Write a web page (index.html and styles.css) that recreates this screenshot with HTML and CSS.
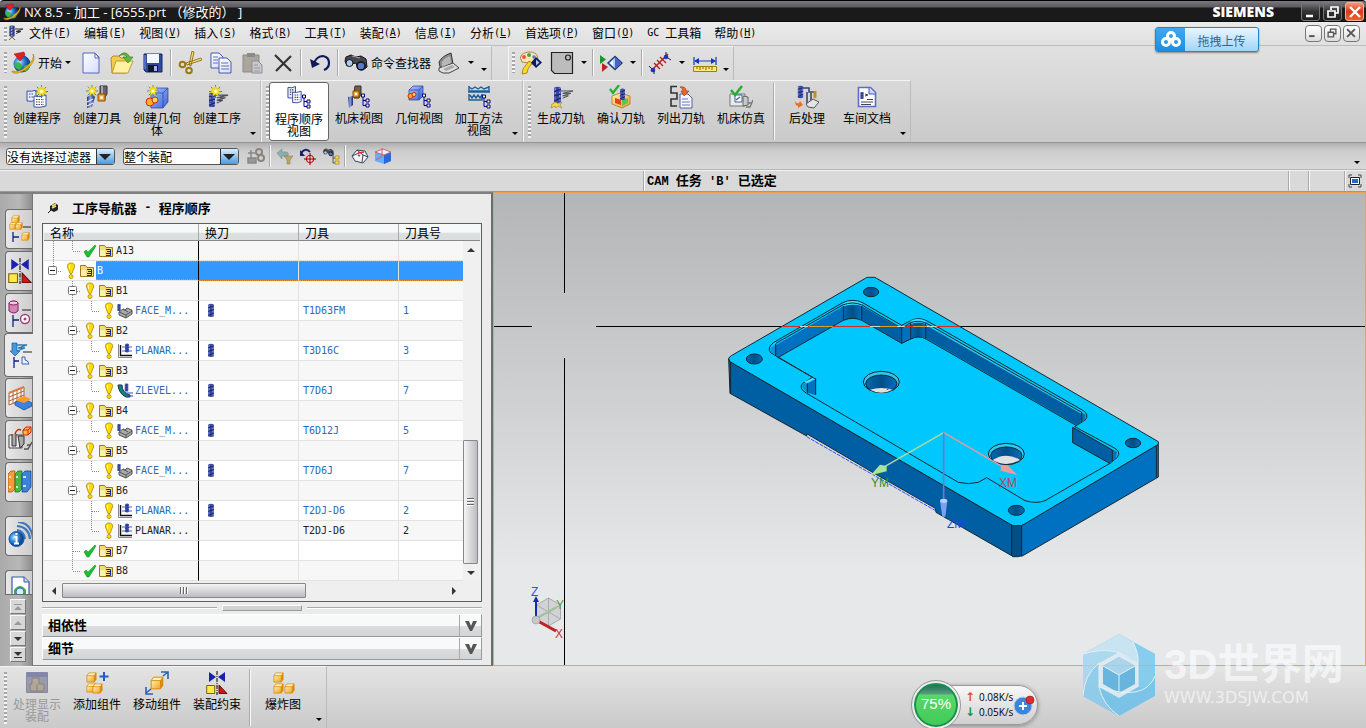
FILE: index.html
```html
<!DOCTYPE html>
<html lang="zh-CN">
<head>
<meta charset="utf-8">
<title>NX 8.5 - 加工</title>
<link rel="stylesheet" href="styles.css">
</head>
<body>
<svg class="defs" aria-hidden="true">
  <defs>
    <linearGradient id="steel"><stop offset="0" stop-color="#23307c"/><stop offset=".4" stop-color="#8fa6ea"/><stop offset="1" stop-color="#1c2560"/></linearGradient>
    <linearGradient id="gold" x2="1" y2="1"><stop offset="0" stop-color="#fff3b0"/><stop offset="1" stop-color="#f0a020"/></linearGradient>
    <linearGradient id="blueface" x2="1" y2="1"><stop offset="0" stop-color="#a8c4ff"/><stop offset="1" stop-color="#3b62d8"/></linearGradient>
    <linearGradient id="paper" x2="1" y2="1"><stop offset="0" stop-color="#fff"/><stop offset="1" stop-color="#d4dcfa"/></linearGradient>
    <linearGradient id="bore"><stop offset="0" stop-color="#0068b0"/><stop offset=".5" stop-color="#004f88"/><stop offset="1" stop-color="#0070bd"/></linearGradient>
    <radialGradient id="globe" cx=".35" cy=".4"><stop offset="0" stop-color="#b9e8ff"/><stop offset=".6" stop-color="#2a80d8"/><stop offset="1" stop-color="#104a98"/></radialGradient>
  </defs>
  <symbol id="star" viewBox="0 0 14 14"><path d="M7 0v14M0 7h14M2 2l10 10M12 2L2 12" stroke="#2d8080" stroke-width="1"/><path d="M7 1l1.300 3.200L12 3 9.800 6 13 8 9.500 8.500 10 12 7 10 4 12l.5-3.500L1 8l3.200-2L3 3l2.800 1.200z" fill="#ffe818" stroke="#d8b000" stroke-width=".5"/><circle cx="7" cy="7" r="1.500" fill="#fff"/></symbol>
  <symbol id="bit" viewBox="0 0 8 16"><path d="M1 1q3-1.500 6 0v13q-3 1.500-6 0z" fill="url(#steel)" stroke="#1c2866" stroke-width=".7"/><path d="M1 5l6-3M1 9l6-3M1 13l6-3" stroke="#2a3580" stroke-width="1.300"/></symbol>
  <symbol id="mill" viewBox="0 0 8 16"><path d="M1 1.500q3-1.500 6 0v13q-3 1-6 0z" fill="#3a49a4"/><path d="M2 2v12M6 2v12" stroke="#8d9fe8" stroke-dasharray="2 1"/><path d="M1 5l6-2M1 9l6-2M1 13l6-2" stroke="#1b2565" stroke-width="1.200"/></symbol>
  <symbol id="tree" viewBox="0 0 9 14"><path d="M2 3v9h4M2 7h4" fill="none" stroke="#000090"/><path d="M.5.5h3v3h-3zM5 5.500h3v3H5zM5 10.500h3v3H5z" fill="#ffffa0" stroke="#000090"/></symbol>
  <symbol id="cube" viewBox="0 0 12 12"><path d="M1 4l2-3h8l-2 3z" fill="#fff5bc"/><path d="M1 4h8v7H1z" fill="url(#gold)"/><path d="M9 4l2-3v7l-2 3z" fill="#e08a10"/><path d="M1 4l2-3h8v7l-2 3H1zM1 4h8v7M9 4l2-3" fill="none" stroke="#d98500" stroke-width=".8"/></symbol>
  <symbol id="grid" viewBox="0 0 22 18"><path d="M1 1q5 1 9-1v10q-4 2-9 1z" fill="#e7edff" stroke="#3450a8"/><path d="M8 6q6 2 12-1v11q-6 2-12 1z" fill="#fff" stroke="#3450a8"/><path d="M3 4h5M3 7h4M10 9.500h8M10 12h8M10 14.500h8" stroke="#445" stroke-width="1.200" stroke-dasharray="1.500 1"/></symbol>
  <symbol id="pages" viewBox="0 0 17 18"><path d="M1 1q4 1 8-1v11q-4 2-8 1z" fill="#e7edff" stroke="#2d449c"/><path d="M6 6q4 1 9-1v11q-4 2-9 1z" fill="#fff" stroke="#2d449c"/><path d="M3 3.500h4M3 6h3M3 8.500h2M8 9h5M8 11.500h5M8 14h5" stroke="#445" stroke-width="1.200" stroke-dasharray="1.500 .8"/></symbol>
  <symbol id="mirror" viewBox="0 0 22 24"><path d="M3 1l7 5-7 5zM19 1l-7 5 7 5z" fill="#1a20b0"/><path d="M11 0v24" stroke="#000" stroke-dasharray="4 1 1 1"/><path d="M.7 14.500h8v8h-8z" fill="#ffe94a" stroke="#7a6500"/><path d="M13 14v8.500h8z" fill="#d01818" stroke="#6d0808"/></symbol>
  <symbol id="speed" viewBox="0 0 16 12"><path d="M0 1h15L2 4h10L2 7h7L2 10" fill="none" stroke="#4a4f60" stroke-width="1.200"/></symbol>
  <symbol id="nx" viewBox="0 0 24 24"><circle cx="11" cy="13" r="8.500" fill="url(#globe)"/><path d="M5 12q3-2 5 1t-2 6q-4-2-5-5zM13 15q4-2 6-1-1 5-5 7-2-3-1-6z" fill="#38b848"/><path d="M1 20Q8 22 16 15T22 3q3 5-2 11T7 22q-6 1-6-2z" fill="#f0b418" stroke="#9a6a00" stroke-width=".5"/><path d="M3 3l10-2 1 3-5 6z" fill="#e32020" stroke="#8d0a0a" stroke-width=".5"/></symbol>
  <symbol id="menu-cam" viewBox="0 0 16 16"><use href="#bit" x="1" y="0" width="6" height="13"/><path d="M7 4h8l-7 2.500h5l-5 2" fill="none" stroke="#333"/><path d="M1 15l3-3 3 3" fill="none" stroke="#806000"/></symbol>
  <symbol id="new" viewBox="0 0 24 24"><path d="M4 2h12l4 4v16H4z" fill="url(#paper)" stroke="#5866c0"/><path d="M16 2l4 5h-4z" fill="#fff" stroke="#5866c0"/></symbol>
  <symbol id="open" viewBox="0 0 24 24"><path d="M1 7l2-2h6l2 2h8v4L16 22H2z" fill="#f0cc50" stroke="#a47b10" stroke-width=".8"/><path d="M2 22l4-12h17l-5 12z" fill="#fff2a0" stroke="#b58a18" stroke-width=".8"/><path d="M9 5q6-7 11 1h3l-5 6-5-6h4Q14 2 9 5z" fill="#63b83c" stroke="#2d7818" stroke-width=".6"/></symbol>
  <symbol id="save" viewBox="0 0 24 24"><path d="M3 3h18v18H5l-2-2z" fill="#2e4ba0" stroke="#182858"/><path d="M6 3h12v9H6z" fill="#f3f7ff"/><path d="M7 14h10v7H7z" fill="#101830"/><path d="M13 15h3v5h-3z" fill="#9fb5e8"/><path d="M4 4v14" stroke="#7e9ce4"/></symbol>
  <symbol id="cut" viewBox="0 0 24 24"><path d="M14 0l2 1-3 14-2-1zM23 7l1 2-15 5-1-2z" fill="#f3dc80" stroke="#846200" stroke-width=".8"/><circle cx="4.500" cy="13.500" r="2.800" fill="none" stroke="#9a7a10" stroke-width="2"/><circle cx="11" cy="19.500" r="2.800" fill="none" stroke="#9a7a10" stroke-width="2"/></symbol>
  <symbol id="copy" viewBox="0 0 24 24"><path d="M2 2h8l4 4v11H2z" fill="url(#paper)" stroke="#4658b0"/><path d="M10 7h8l4 4v11H10z" fill="url(#paper)" stroke="#4658b0"/><path d="M4 6h5M4 9h5M4 12h5M12 12h7M12 15h8M12 18h8" stroke="#6070b8"/></symbol>
  <symbol id="paste" viewBox="0 0 24 24"><path d="M3 4h16v17H3z" fill="#aaa69b" stroke="#8c8980"/><path d="M7 2h8v4H7z" fill="#8b8b8b"/><path d="M12 10h6l4 4v8H12z" fill="#c7c9cc" stroke="#8e9098"/><path d="M14 14h4M14 17h6M14 20h6" stroke="#999"/></symbol>
  <symbol id="del" viewBox="0 0 24 24"><path d="M4 4l16 16M20 5L5 20" stroke="#333" stroke-width="2.200"/></symbol>
  <symbol id="undo" viewBox="0 0 24 24"><path d="M6 12q3-7 9-7 6 1 6 7 0 5-5 7" fill="none" stroke="#10185c" stroke-width="2.200"/><path d="M2 8l2 9 8-4z" fill="#10185c"/></symbol>
  <symbol id="bino" viewBox="0 0 24 24"><path d="M2 6l5-2 5 2 5-1 5 3 1 8-4 3-5-1-2-6-5 1-4 2-2-5z" fill="#45484f" stroke="#111"/><circle cx="5.500" cy="12" r="3.500" fill="#adc6f5" stroke="#111"/><circle cx="17" cy="15" r="4" fill="#5678d0" stroke="#111" stroke-width="1.500"/><path d="M8 5l8 2" stroke="#aaa"/></symbol>
  <symbol id="laptop" viewBox="0 0 24 24"><path d="M2 11Q5 5 14 2l2 11-12 7z" fill="#8d8d8d" stroke="#333"/><path d="M2 17l14-5 6 5-10 5q-7 1-10-2z" fill="#dedede" stroke="#444"/><path d="M5 11q3-4 8-6l1 7-9 4z" fill="#b5b8bb"/><path d="M6 18l9-4 3 2-9 4z" fill="#aaa"/></symbol>
  <symbol id="palette" viewBox="0 0 24 24"><path d="M9 1q10-1 10 8l-4 5-5-2-7-1Q-2 3 9 1z" fill="#ffe5b0" stroke="#977020" stroke-width=".8"/><circle cx="5" cy="6" r="2" fill="#f25050"/><circle cx="10" cy="4" r="2" fill="#50a050"/><circle cx="15" cy="6" r="1.800" fill="#4888e0"/><path d="M3 23l1-5 6-8 3 2-4 6-1 4z" fill="#ffd820" stroke="#8a6a00" stroke-width=".7"/><path d="M12 11.500L17 6l6 5.500-6 5.500z" fill="#11185c"/><path d="M17 8.500v6l3.500-3z" fill="#a9c2ff"/></symbol>
  <symbol id="square" viewBox="0 0 24 24"><path d="M1.500 1.500h21v21h-18l-3-3z" fill="#bcbcbc" stroke="#222" stroke-width="1.200"/><circle cx="18" cy="6.500" r="2.500" fill="none" stroke="#222" stroke-width="1.200"/></symbol>
  <symbol id="play" viewBox="0 0 24 24"><path d="M1 4v9l6-4.500z" fill="#189828"/><path d="M3 12v9l6-5z" fill="#c02020"/><path d="M9 12l7-6.500 7 6.500-7 6.500z" fill="#b5cdf8" stroke="#26387c" stroke-width="1.500"/><path d="M16 6v12l6-6z" fill="#3e68c8"/><path d="M14 9v6l-3-3z" fill="#fff"/></symbol>
  <symbol id="fit" viewBox="0 0 24 24"><path d="M3 20L20 3" stroke="#c01818" stroke-width="1.500"/><path d="M6 12l6 6M9 9l6 6M12 6l6 6" stroke="#c01818" stroke-width="1.300"/><circle cx="5" cy="19" r="2.300" fill="#1e34c8"/><circle cx="18" cy="6" r="2.300" fill="#1e34c8"/><path d="M1 15l3 3M18 1v4M20 7l3 2M6 20v3" stroke="#123" /></symbol>
  <symbol id="measure" viewBox="0 0 24 24"><path d="M1 6v8M23 6v8M2 10h20" stroke="#1438b8" stroke-width="1.200"/><path d="M1 10l5-3v6zM23 10l-5-3v6z" fill="#1438b8"/><path d="M.5 15.500h23v5H.5z" fill="#ffe978" stroke="#a08000"/><path d="M4 16v2M7 16v3M10 16v2M13 16v3M16 16v2M19 16v3" stroke="#806000"/></symbol>
  <symbol id="c-prog" viewBox="0 0 24 24"><use href="#grid" x="1" y="5" width="22" height="18"/><use href="#star" x="10" y="0" width="13" height="13"/></symbol>
  <symbol id="c-tool" viewBox="0 0 24 24"><path d="M15 1h7v8l-2 3v3h-6v-3l1-2z" fill="#6a6470" stroke="#332e38"/><path d="M17 1v9" stroke="#bbb" stroke-width="1.500"/><path d="M13 9h7v7h-7z" fill="#f5a32a" stroke="#8a4e00"/><circle cx="16.500" cy="12.500" r="1.500" fill="#fff"/><path d="M2 12l5-3 3 3-3 10-5 1z" fill="url(#steel)"/><path d="M2 17l6-3M2 21l6-3" stroke="#fff"/><use href="#star" x="1" y="0" width="12" height="12"/></symbol>
  <symbol id="c-geo" viewBox="0 0 24 24"><path d="M6 8l5-5h12v14l-5 6H6z" fill="url(#blueface)" stroke="#26409c" stroke-width=".7"/><path d="M6 8h12l5-5M18 8v15" fill="none" stroke="#26409c" stroke-width=".7"/><circle cx="5" cy="17" r="4" fill="#ffb030" stroke="#d02810"/><circle cx="10" cy="15" r="3" fill="#ffd850" stroke="#d02810"/><use href="#star" x="2" y="0" width="12" height="12"/></symbol>
  <symbol id="c-op" viewBox="0 0 24 24"><use href="#mill" x="3" y="7" width="8" height="16"/><use href="#speed" x="10" y="9" width="14" height="11"/><use href="#star" x="4" y="0" width="13" height="13"/></symbol>
  <symbol id="v-prog" viewBox="0 0 24 24"><use href="#pages" x="0" y="0" width="16" height="18"/><use href="#tree" x="15" y="8" width="9" height="15"/></symbol>
  <symbol id="v-tool" viewBox="0 0 24 24"><path d="M8 1h6v8l-2 4H7V8z" fill="#70604e" stroke="#332e28"/><path d="M6 6h6v6H6z" fill="#f5a32a" stroke="#8a4e00"/><circle cx="9" cy="9" r="1.300" fill="#fff"/><path d="M1 12l5-1v9l-4 3z" fill="url(#steel)"/><use href="#tree" x="14" y="8" width="9" height="15"/></symbol>
  <symbol id="v-geo" viewBox="0 0 24 24"><path d="M2 5l4-4h10v10l-4 4H2z" fill="url(#blueface)" stroke="#26409c" stroke-width=".7"/><path d="M2 5h10l4-4M12 5v10" fill="none" stroke="#26409c" stroke-width=".7"/><circle cx="3.500" cy="11" r="2.500" fill="#ffb030" stroke="#d02810"/><circle cx="7" cy="9.500" r="2" fill="#ffd850" stroke="#d02810"/><use href="#tree" x="15" y="8" width="9" height="15"/></symbol>
  <symbol id="v-meth" viewBox="0 0 24 24"><path d="M2 1v5h20V1M2 2l3 2 3-2 3 2 3-2 3 2 5-2M1 7h22M2 9v6h13V9M3 10l2 3 2-3 2 3 2-3 2 3 2-3" fill="none" stroke="#1f5f98" stroke-width="1.400"/><use href="#tree" x="15" y="9" width="9" height="15"/></symbol>
  <symbol id="gen" viewBox="0 0 24 24"><use href="#mill" x="4" y="1" width="9" height="18"/><use href="#speed" x="12" y="4" width="13" height="12"/><path d="M3 19l4-2 2 2 4-2-2 3 2 3-4-2-2 2-1-2-4 2z" fill="#f7d743" stroke="#7c751c" stroke-width=".5"/></symbol>
  <symbol id="verify" viewBox="0 0 24 24"><path d="M3 11l8-3 10 3v8l-8 4-10-4z" fill="url(#gold)" stroke="#a36a00" stroke-width=".7"/><path d="M6 13l6 2v5l-6-2z" fill="#e84020"/><path d="M13 15l6-2v5l-6 3z" fill="#5ac850"/><use href="#mill" x="10" y="3" width="7" height="13"/><path d="M1 4l3 4 6-8" fill="none" stroke="#20b030" stroke-width="2.200"/></symbol>
  <symbol id="list" viewBox="0 0 24 24"><path d="M8 1.500H2V8h6v6H2v7h6" fill="none" stroke="#333" stroke-width="1.600"/><path d="M11 9h8l4 4v10H11z" fill="#f7f9ff" stroke="#4b60a8"/><path d="M13 14h6M13 17h8M13 20h8" stroke="#6878b0"/><path d="M11 2q6-1 6 4h3l-5 5-3-5h2q0-3-3-4z" fill="#f06820" stroke="#a03000" stroke-width=".6"/></symbol>
  <symbol id="sim" viewBox="0 0 24 24"><path d="M1 9h15v12H1z" fill="#e8eaec" stroke="#777"/><path d="M6 10h7v7H6z" fill="#fff" stroke="#445ca0"/><path d="M14 11l5 1v8l-5 1z" fill="#c5c9cc" stroke="#666"/><path d="M17 22h4l3-7M19 18h4" fill="none" stroke="#777" stroke-width="1.300"/><path d="M7 15l4-3" stroke="#4460c0" stroke-width="1.500"/><path d="M2 5l4 5 7-9" fill="none" stroke="#20b030" stroke-width="2.400"/></symbol>
  <symbol id="post" viewBox="0 0 24 24"><use href="#mill" x="2" y="0" width="7" height="14"/><path d="M8 3h6v4h6M12 7v12M16 8v8" fill="none" stroke="#3b4768" stroke-width="1.600"/><path d="M20 6v7" stroke="#c09020" stroke-width="3"/><path d="M11 19l7-5 6 3-5 6-6-1z" fill="#e2e4e6" stroke="#555"/><path d="M0 16q1 3 4 2l1-2 3 4-5 3v-2q-3 0-3-5z" fill="#f07020"/></symbol>
  <symbol id="doc" viewBox="0 0 24 24"><path d="M3.500 2.500h12l5 5v14h-17z" fill="#fff" stroke="#5a6cc8" stroke-width="1.600"/><path d="M14 3v6h6" fill="#c8d5ff" stroke="#3f56b8"/><use href="#mill" x="5" y="6" width="4" height="9"/><path d="M10 9l3 1-3 1M12 14.500h6M6 17h12M6 19.500h10" fill="none" stroke="#445" /></symbol>
  <symbol id="f-grey" viewBox="0 0 18 18"><path d="M1 11h8v5H1zM4 3v9M1 6h7" fill="#999" stroke="#888" stroke-width="1.500"/><circle cx="12" cy="5" r="3" fill="none" stroke="#89867c" stroke-width="2"/><circle cx="14" cy="11" r="3" fill="none" stroke="#89867c" stroke-width="2"/></symbol>
  <symbol id="f-filter" viewBox="0 0 18 18"><path d="M1 6l5-4v3h5q2 0 1 4H6v3z" fill="#8caeb0" stroke="#6f9092" stroke-width=".6"/><path d="M8 9h9l-3 4v4h-3v-4z" fill="#b9a76a" stroke="#908050" stroke-width=".6"/></symbol>
  <symbol id="f-target" viewBox="0 0 18 18"><path d="M2 6q5-6 9-1" fill="none" stroke="#18206c" stroke-width="2"/><path d="M1 3v6h5z" fill="#18206c"/><circle cx="11" cy="12" r="3.500" fill="#ffdede" stroke="#d01818" stroke-width="1.200"/><path d="M11 6v12M5 12h12" stroke="#600"/></symbol>
  <symbol id="f-find" viewBox="0 0 18 18"><use href="#bino" x="0" y="0" width="13" height="11"/><path d="M11 7v9h3M11 11h3" stroke="#556" fill="none"/><path d="M13 9h4v3h-4zM13 14h4v3h-4z" fill="#ffde50" stroke="#a38000" stroke-width=".7"/></symbol>
  <symbol id="f-box" viewBox="0 0 18 18"><path d="M1 9l5-6 8 1 3 6-5 6-8-2z" fill="#f1f4f8" stroke="#39465c"/><path d="M6 3l6 5 5 2M12 8l-1 7M1 9l7-3" fill="none" stroke="#39465c"/><path d="M7 6l6-1M7 8l2 1" stroke="#d03030" stroke-width="1.500"/></symbol>
  <symbol id="f-cube" viewBox="0 0 18 18"><path d="M1 5l8-3 8 3v9l-7 3-9-3z" fill="#66aff8"/><path d="M10 8l7-3v9l-7 3z" fill="#2a68dc"/><path d="M1 5l8-3 8 3-7 3z" fill="#e8f1ff" stroke="#d05050" stroke-width=".8"/><path d="M8 1v8l-6 4" stroke="#e25858" fill="none"/></symbol>
  <symbol id="screen" viewBox="0 0 14 14"><path d="M1 4V1h3M10 1h3v3M13 10v3h-3M4 13H1v-3" fill="none" stroke="#444"/><path d="M2.500 3.500h9v7h-9z" fill="#fff" stroke="#222"/><path d="M4 5h6v4H4z" fill="#2968c0"/></symbol>
  <symbol id="warn" viewBox="0 0 10 18"><path d="M5 1q4 0 3.500 4L6 11.500H4L1.500 5Q1 1 5 1z" fill="#ffdc10" stroke="#a98600" stroke-width=".8"/><circle cx="5" cy="14.500" r="2" fill="#ffdc10" stroke="#a98600" stroke-width=".8"/><path d="M3.500 3v4" stroke="#fff9b0"/></symbol>
  <symbol id="ok" viewBox="0 0 14 14"><path d="M1 8l2-2 2 2 7-7 1 1-7 11H4z" fill="#18c030" stroke="#0b8c1c" stroke-width=".5"/></symbol>
  <symbol id="folder" viewBox="0 0 16 16"><path d="M1.500 4.500V2.500h5l1.500 2h6.500v9h-13z" fill="#f7da75" stroke="#9a7820"/><path d="M2 7h5v6H2z" fill="#fff0b0"/><path d="M8 6.500h4.500v2H9M8 10.500h1M9 10.500h3.500v2H8M12.500 8v3" fill="none" stroke="#1022b0"/></symbol>
  <symbol id="face" viewBox="0 0 16 16"><path d="M2 9l4-3 2 1 2-2 5 2v4l-6 4-7-3z" fill="#aaa" stroke="#555"/><path d="M2 9l7 3 6-4M9 12v3M6 6l5 3" fill="none" stroke="#555"/><use href="#mill" x="0" y="0" width="4" height="9"/></symbol>
  <symbol id="planar" viewBox="0 0 16 16"><path d="M1.500 1v13.500H15" fill="none" stroke="#888"/><path d="M3.500 2v10.500H15" fill="none" stroke="#111" stroke-width="1.400"/><path d="M5 4h10M5 8h10" stroke="#4060d0"/><use href="#mill" x="7" y="0" width="6" height="10"/></symbol>
  <symbol id="zlevel" viewBox="0 0 16 16"><path d="M1 2h4q0 8 8 10v2H9Q2 11 1 2z" fill="#168080" stroke="#0c3b3b"/><path d="M8 10h8M10 13h6" stroke="#3048c8"/><use href="#mill" x="7" y="0" width="5" height="9"/></symbol>
  <symbol id="t-line" viewBox="0 0 19 20"><path d="M9.500 0v20" stroke="#888" stroke-dasharray="1 1"/></symbol>
  <symbol id="t-tee" viewBox="0 0 19 20"><path d="M9.500 0v20M10 10.500h8" stroke="#888" stroke-dasharray="1 1"/></symbol>
  <symbol id="t-end" viewBox="0 0 19 20"><path d="M9.500 0v10M10 10.500h8" stroke="#888" stroke-dasharray="1 1"/></symbol>
  <symbol id="t-box" viewBox="0 0 19 20"><path d="M9.500 0v20M14 10.500h4" stroke="#888" stroke-dasharray="1 1"/><rect x="5.500" y="5.500" width="8" height="8" rx="1" fill="#fff" stroke="#777"/><path d="M7 9.500h5" stroke="#222"/></symbol>
  <symbol id="t-root" viewBox="0 0 19 20"><path d="M9.500 0v6M14 10.500h4" stroke="#888" stroke-dasharray="1 1"/><rect x="4.500" y="5.500" width="8" height="8" rx="1" fill="#fff" stroke="#777"/><path d="M6 9.500h5" stroke="#222"/></symbol>
  <symbol id="r-asm" viewBox="0 0 24 28"><use href="#cube" x="3" y="0" width="9" height="9"/><use href="#cube" x="1" y="7" width="8" height="8"/><use href="#cube" x="7" y="7" width="8" height="8"/><path d="M15 12h8" stroke="#222"/><path d="M5 17v10M5 22h6" stroke="#102088" fill="none" stroke-width="1.300"/><use href="#cube" x="13" y="17" width="9" height="9"/></symbol>
  <symbol id="r-part" viewBox="0 0 24 28"><path d="M1 4q5-4 9 0v8q-4 4-9 0z" fill="#d883b8" stroke="#84205c"/><ellipse cx="5.500" cy="4" rx="4.500" ry="2" fill="#f5c6e2" stroke="#84205c"/><path d="M14 11h9" stroke="#222"/><path d="M5 16v12M5 21h6" stroke="#102088" stroke-width="1.300"/><circle cx="17" cy="20" r="4.500" fill="#fff" stroke="#a04078" stroke-width="1.500"/><circle cx="17" cy="20" r="1.500" fill="#a04078"/></symbol>
  <symbol id="r-op" viewBox="0 0 24 28"><path d="M3 2h5v8h3l-5 5-5-5h2z" fill="#4a98d8" stroke="#185c98" stroke-width=".7"/><path d="M8 4h10l-9 3h7l-8 3" fill="none" stroke="#2878b8" stroke-width="1.300"/><path d="M14 11h9" stroke="#222"/><path d="M5 16v11M5 20h5" stroke="#102088" stroke-width="1.300"/><path d="M13 16v7h7q-1-4-4-4v-3z" fill="#e8f3ff" stroke="#4060b0"/></symbol>
  <symbol id="r-mach" viewBox="0 0 24 28"><path d="M1 9l15-6v12L1 21z" fill="#fff" stroke="#b06038"/><path d="M1 13l15-6M1 17l15-6M5 8v11M9 6v12M13 5v12" stroke="#b06038"/><path d="M1 9l15-6" stroke="#e07a40" stroke-width="2"/><path d="M7 18l8-4 9 5v3l-8 4-9-5z" fill="#3c82e0" stroke="#184088" stroke-width=".7"/><path d="M7 16l9-4 7 3-7 4z" fill="#ff9a28"/></symbol>
  <symbol id="r-sim" viewBox="0 0 24 28"><path d="M1 9h13v13H1z" fill="#eee" stroke="#444"/><path d="M4 8v12h4V8M10 10h6v8l-4 4z" fill="#aaa" stroke="#333"/><path d="M16 23h4l4-7M19 19h4" fill="none" stroke="#555" stroke-width="1.500"/><path d="M15 4l3-3h5v5l-3 3h-5z" fill="#ffb848" stroke="#d02000"/><path d="M15 4h5l3-3M20 4v5" stroke="#d02000" fill="none"/><path d="M7 8q2-6 6-4" fill="none" stroke="#d02000" stroke-width="1.500"/></symbol>
  <symbol id="r-book" viewBox="0 0 24 28"><path d="M0 6l3-3h4v18l-3 3H0z" fill="#f89a38" stroke="#a44c00" stroke-width=".7"/><path d="M7 6l3-3h4v18l-3 3H7z" fill="#46b848" stroke="#136818" stroke-width=".7"/><path d="M14 6l3-3h6v16l-4 5h-5z" fill="#3b82dc" stroke="#163c84" stroke-width=".7"/><path d="M1 9h2M8 9h2M15 9h3M1 19h2M8 19h2M15 18h3" stroke="#fff" stroke-width="1.500"/></symbol>
  <symbol id="r-info" viewBox="0 0 24 28"><path d="M9 8q7 1 8 9M9 4q12 1 13 13M10 0q13 1 15 16" fill="none" stroke="#3f78bc" stroke-width="2.200"/><circle cx="8.500" cy="17" r="7.500" fill="url(#globe)" stroke="#1e58a0"/><path d="M8.500 11v2M6.500 15h2v6M6 21.500h5" stroke="#fff" stroke-width="2" fill="none"/></symbol>
  <symbol id="r-hist" viewBox="0 0 24 28"><path d="M4 6h12l5 5v14H4z" fill="#fff" stroke="#3858a8" stroke-width="1.200"/><path d="M16 6v5h5" fill="#c8d5ff" stroke="#3858a8"/><path d="M6 19q6-8 12 0v6H6z" fill="#48a848"/><circle cx="12" cy="21" r="4" fill="#d8eeff" stroke="#2878b8"/></symbol>
  <symbol id="a-disp" viewBox="0 0 24 24"><path d="M1.500 1.500h21v20h-21z" fill="#6c7092" stroke="#4c5080"/><path d="M2 2h20v4H2z" fill="#45498a"/><path d="M5 13h2V7h7v6h5v7H5zM12 13v7" fill="#93866a" stroke="#4d4838"/></symbol>
  <symbol id="a-add" viewBox="0 0 24 24"><use href="#cube" x="1" y="1" width="11" height="11"/><use href="#cube" x="1" y="12" width="10" height="10"/><use href="#cube" x="7" y="12" width="11" height="11"/><path d="M19 1v9M14.500 5.500h9" stroke="#2858c8" stroke-width="2"/></symbol>
  <symbol id="a-move" viewBox="0 0 24 24"><use href="#cube" x="5" y="5" width="14" height="14"/><path d="M16 1h7v7M18 5l5-4M1 16v7h7M1 22l5-4" fill="none" stroke="#3060b8" stroke-width="1.600"/></symbol>
  <symbol id="a-exp" viewBox="0 0 24 24"><use href="#cube" x="2" y="1" width="11" height="11"/><use href="#cube" x="2" y="12" width="11" height="11"/><use href="#cube" x="13" y="12" width="11" height="11"/></symbol>
  <symbol id="w-min" viewBox="0 0 18 18"><path d="M4 13h7" stroke="currentColor" stroke-width="2.500"/></symbol>
  <symbol id="w-max" viewBox="0 0 18 18"><path d="M4 8h7v6H4zM7 7V4h7v6h-3" fill="none" stroke="currentColor" stroke-width="1.700"/></symbol>
  <symbol id="w-x" viewBox="0 0 18 18"><path d="M4 4l10 10M14 4L4 14" stroke="currentColor" stroke-width="2.400"/></symbol>
</svg>

<header class="titlebar">
  <svg class="i18"><use href="#nx"/></svg>
  <h1 class="title">NX 8.5 - 加工 - [6555.prt （修改的） ]</h1>
  <span class="brand">SIEMENS</span>
  <div class="wins">
    <button class="win" aria-label="最小化"><svg class="i18"><use href="#w-min"/></svg></button>
    <button class="win" aria-label="还原"><svg class="i18"><use href="#w-max"/></svg></button>
    <button class="win close" aria-label="关闭"><svg class="i18"><use href="#w-x"/></svg></button>
  </div>
</header>

<nav class="menubar">
  <span class="grip"></span>
  <svg class="i16"><use href="#menu-cam"/></svg>
  <div class="menus">
    <button class="menu">文件<span>(<u>F</u>)</span></button>
    <button class="menu">编辑<span>(<u>E</u>)</span></button>
    <button class="menu">视图<span>(<u>V</u>)</span></button>
    <button class="menu">插入<span>(<u>S</u>)</span></button>
    <button class="menu">格式<span>(<u>R</u>)</span></button>
    <button class="menu">工具<span>(<u>T</u>)</span></button>
    <button class="menu">装配<span>(<u>A</u>)</span></button>
    <button class="menu">信息<span>(<u>I</u>)</span></button>
    <button class="menu">分析<span>(<u>L</u>)</span></button>
    <button class="menu">首选项<span>(<u>P</u>)</span></button>
    <button class="menu">窗口<span>(<u>O</u>)</span></button>
    <button class="menu"><span>GC&nbsp;</span>工具箱</button>
    <button class="menu">帮助<span>(<u>H</u>)</span></button>
  </div>
  <div class="docwins">
    <button class="docwin" aria-label="最小化文档"><svg class="i14"><use href="#w-min"/></svg></button>
    <button class="docwin" aria-label="还原文档"><svg class="i14"><use href="#w-max"/></svg></button>
    <button class="docwin" aria-label="关闭文档"><svg class="i14"><use href="#w-x"/></svg></button>
  </div>
</nav>

<section class="tools">
  <div class="toolrow">
    <div class="bar small">
      <span class="grip"></span>
      <button class="start"><svg class="i24"><use href="#nx"/></svg>开始<i class="tri"></i></button>
      <button class="tb" aria-label="新建"><svg class="i24"><use href="#new"/></svg></button>
      <button class="tb" aria-label="打开"><svg class="i24"><use href="#open"/></svg></button>
      <button class="tb" aria-label="保存"><svg class="i24"><use href="#save"/></svg></button>
      <span class="sep"></span>
      <button class="tb" aria-label="剪切"><svg class="i24"><use href="#cut"/></svg></button>
      <button class="tb" aria-label="复制"><svg class="i24"><use href="#copy"/></svg></button>
      <button class="tb" aria-label="粘贴"><svg class="i24"><use href="#paste"/></svg></button>
      <button class="tb" aria-label="删除"><svg class="i24"><use href="#del"/></svg></button>
      <span class="sep"></span>
      <button class="tb" aria-label="撤消"><svg class="i24"><use href="#undo"/></svg></button>
      <span class="sep"></span>
      <button class="finder"><svg class="i24"><use href="#bino"/></svg>命令查找器</button>
      <button class="tb" aria-label="触控模式"><svg class="i24"><use href="#laptop"/></svg></button>
      <button class="drop" aria-label="展开"><i class="tri"></i></button>
      <button class="more" aria-label="工具条选项"><i class="tri"></i></button>
    </div>
    <div class="bar small second">
      <span class="grip"></span>
      <button class="tb" aria-label="渲染样式"><svg class="i24"><use href="#palette"/></svg></button>
      <button class="tb" aria-label="背景"><svg class="i24"><use href="#square"/></svg></button>
      <button class="drop" aria-label="展开"><i class="tri"></i></button>
      <span class="sep"></span>
      <button class="tb" aria-label="显示和隐藏"><svg class="i24"><use href="#play"/></svg></button>
      <button class="drop" aria-label="展开"><i class="tri"></i></button>
      <span class="sep"></span>
      <button class="tb" aria-label="移动对象"><svg class="i24"><use href="#fit"/></svg></button>
      <button class="drop" aria-label="展开"><i class="tri"></i></button>
      <button class="tb" aria-label="测量距离"><svg class="i24"><use href="#measure"/></svg></button>
      <button class="more" aria-label="工具条选项"><i class="tri"></i></button>
    </div>
  </div>
  <div class="toolrow big">
    <div class="bar">
      <span class="grip"></span>
      <button class="cmd"><svg class="i24"><use href="#c-prog"/></svg>创建程序</button>
      <button class="cmd"><svg class="i24"><use href="#c-tool"/></svg>创建刀具</button>
      <button class="cmd"><svg class="i24"><use href="#c-geo"/></svg>创建几何体</button>
      <button class="cmd"><svg class="i24"><use href="#c-op"/></svg>创建工序</button>
      <button class="more" aria-label="工具条选项"><i class="tri"></i></button>
    </div>
    <div class="bar">
      <span class="grip"></span>
      <button class="cmd on"><svg class="i24"><use href="#v-prog"/></svg>程序顺序视图</button>
      <button class="cmd"><svg class="i24"><use href="#v-tool"/></svg>机床视图</button>
      <button class="cmd"><svg class="i24"><use href="#v-geo"/></svg>几何视图</button>
      <button class="cmd"><svg class="i24"><use href="#v-meth"/></svg>加工方法视图</button>
      <button class="more" aria-label="工具条选项"><i class="tri"></i></button>
    </div>
    <div class="bar">
      <span class="grip"></span>
      <button class="cmd"><svg class="i24"><use href="#gen"/></svg>生成刀轨</button>
      <button class="cmd"><svg class="i24"><use href="#verify"/></svg>确认刀轨</button>
      <button class="cmd"><svg class="i24"><use href="#list"/></svg>列出刀轨</button>
      <button class="cmd"><svg class="i24"><use href="#sim"/></svg>机床仿真</button>
      <span class="sep"></span>
      <button class="cmd"><svg class="i24"><use href="#post"/></svg>后处理</button>
      <button class="cmd"><svg class="i24"><use href="#doc"/></svg>车间文档</button>
      <button class="more" aria-label="工具条选项"><i class="tri"></i></button>
    </div>
  </div>
</section>

<section class="selbar">
  <span class="combo"><select class="pick" aria-label="选择过滤器"><option>没有选择过滤器</option></select></span>
  <span class="combo wide"><select class="pick" aria-label="选择范围"><option>整个装配</option></select></span>
  <button class="sb" aria-label="选择意图"><svg class="i18"><use href="#f-grey"/></svg></button>
  <span class="sep"></span>
  <button class="sb" aria-label="过滤器"><svg class="i18"><use href="#f-filter"/></svg></button>
  <button class="sb" aria-label="重置"><svg class="i18"><use href="#f-target"/></svg></button>
  <button class="sb" aria-label="查找"><svg class="i18"><use href="#f-find"/></svg></button>
  <span class="sep"></span>
  <button class="sb" aria-label="隐藏边"><svg class="i18"><use href="#f-box"/></svg></button>
  <button class="sb" aria-label="着色"><svg class="i18"><use href="#f-cube"/></svg></button>
  <button class="more" aria-label="选择条选项"><i class="tri"></i></button>
</section>

<section class="status">
  <span class="st-cue"></span>
  <span class="st-text"><b class="mono">CAM </b>任务<b class="mono"> 'B' </b>已选定</span>
  <span class="st-a"></span><span class="st-b"></span>
  <button class="st-full" aria-label="全屏"><svg class="i14"><use href="#screen"/></svg></button>
</section>

<main class="work">
  <nav class="rail">
    <button class="tab" aria-label="装配导航器"><svg class="i28"><use href="#r-asm"/></svg></button>
    <button class="tab" aria-label="约束导航器"><svg class="i28"><use href="#mirror"/></svg></button>
    <button class="tab" aria-label="部件导航器"><svg class="i28"><use href="#r-part"/></svg></button>
    <button class="tab active" aria-label="工序导航器"><svg class="i28"><use href="#r-op"/></svg></button>
    <button class="tab" aria-label="机床导航器"><svg class="i28"><use href="#r-mach"/></svg></button>
    <button class="tab" aria-label="加工特征导航器"><svg class="i28"><use href="#r-sim"/></svg></button>
    <button class="tab" aria-label="重用库"><svg class="i28"><use href="#r-book"/></svg></button>
    <button class="tab apart" aria-label="浏览器"><svg class="i28"><use href="#r-info"/></svg></button>
    <button class="tab apart clipped" aria-label="历史记录"><svg class="i28"><use href="#r-hist"/></svg></button>
    <div class="steps">
      <button class="step" aria-label="第一个"><i class="line"></i><i class="up dim"></i></button>
      <button class="step" aria-label="上一个"><i class="up dim"></i></button>
      <button class="step" aria-label="下一个"><i class="down"></i></button>
      <button class="step" aria-label="最后一个"><i class="down"></i><i class="line dark"></i></button>
    </div>
  </nav>

  <section class="panel">
    <h2 class="ptitle"><svg class="i12" viewBox="0 0 12 12"><path d="M1 11l4-4" stroke="#111"/><path d="M3 4l5-3 3 2v5L7 10 3 8z" fill="#222"/><path d="M5 4l4-2M5 6l4-2" stroke="#f0e060" stroke-width="1.400"/></svg>工序导航器<span class="mono"> - </span>程序顺序</h2>
    <div class="treebox">
      <div class="treemain">
        <table class="tree">
          <colgroup><col class="c1"><col class="c2"><col class="c2"><col></colgroup>
          <thead><tr><th>名称</th><th>换刀</th><th>刀具</th><th>刀具号</th></tr></thead>
          <tbody>
            <tr><td><div class="node"><svg class="tc"><use href="#t-line"/></svg><svg class="tc"><use href="#t-end"/></svg><svg class="st"><use href="#ok"/></svg><svg class="i16"><use href="#folder"/></svg><span class="nm">A13</span></div></td><td></td><td></td><td></td></tr>
            <tr class="sel"><td><div class="node"><button class="exp" aria-label="折叠 B"><svg class="tc"><use href="#t-root"/></svg></button><svg class="st tall"><use href="#warn"/></svg><svg class="i16"><use href="#folder"/></svg><span class="nm">B</span></div></td><td></td><td></td><td></td></tr>
            <tr><td><div class="node"><i class="tc"></i><button class="exp" aria-label="折叠 B1"><svg class="tc"><use href="#t-box"/></svg></button><svg class="st tall"><use href="#warn"/></svg><svg class="i16"><use href="#folder"/></svg><span class="nm">B1</span></div></td><td></td><td></td><td></td></tr>
            <tr class="op"><td><div class="node"><i class="tc"></i><svg class="tc"><use href="#t-line"/></svg><svg class="tc"><use href="#t-end"/></svg><svg class="st tall"><use href="#warn"/></svg><svg class="i16"><use href="#face"/></svg><span class="nm">FACE_M...</span></div></td><td><svg class="bit"><use href="#mill"/></svg></td><td>T1D63FM</td><td>1</td></tr>
            <tr><td><div class="node"><i class="tc"></i><button class="exp" aria-label="折叠 B2"><svg class="tc"><use href="#t-box"/></svg></button><svg class="st tall"><use href="#warn"/></svg><svg class="i16"><use href="#folder"/></svg><span class="nm">B2</span></div></td><td></td><td></td><td></td></tr>
            <tr class="op"><td><div class="node"><i class="tc"></i><svg class="tc"><use href="#t-line"/></svg><svg class="tc"><use href="#t-end"/></svg><svg class="st tall"><use href="#warn"/></svg><svg class="i16"><use href="#planar"/></svg><span class="nm">PLANAR...</span></div></td><td><svg class="bit"><use href="#mill"/></svg></td><td>T3D16C</td><td>3</td></tr>
            <tr><td><div class="node"><i class="tc"></i><button class="exp" aria-label="折叠 B3"><svg class="tc"><use href="#t-box"/></svg></button><svg class="st tall"><use href="#warn"/></svg><svg class="i16"><use href="#folder"/></svg><span class="nm">B3</span></div></td><td></td><td></td><td></td></tr>
            <tr class="op"><td><div class="node"><i class="tc"></i><svg class="tc"><use href="#t-line"/></svg><svg class="tc"><use href="#t-end"/></svg><svg class="st tall"><use href="#warn"/></svg><svg class="i16"><use href="#zlevel"/></svg><span class="nm">ZLEVEL...</span></div></td><td><svg class="bit"><use href="#mill"/></svg></td><td>T7D6J</td><td>7</td></tr>
            <tr><td><div class="node"><i class="tc"></i><button class="exp" aria-label="折叠 B4"><svg class="tc"><use href="#t-box"/></svg></button><svg class="st tall"><use href="#warn"/></svg><svg class="i16"><use href="#folder"/></svg><span class="nm">B4</span></div></td><td></td><td></td><td></td></tr>
            <tr class="op"><td><div class="node"><i class="tc"></i><svg class="tc"><use href="#t-line"/></svg><svg class="tc"><use href="#t-end"/></svg><svg class="st tall"><use href="#warn"/></svg><svg class="i16"><use href="#face"/></svg><span class="nm">FACE_M...</span></div></td><td><svg class="bit"><use href="#mill"/></svg></td><td>T6D12J</td><td>5</td></tr>
            <tr><td><div class="node"><i class="tc"></i><button class="exp" aria-label="折叠 B5"><svg class="tc"><use href="#t-box"/></svg></button><svg class="st tall"><use href="#warn"/></svg><svg class="i16"><use href="#folder"/></svg><span class="nm">B5</span></div></td><td></td><td></td><td></td></tr>
            <tr class="op"><td><div class="node"><i class="tc"></i><svg class="tc"><use href="#t-line"/></svg><svg class="tc"><use href="#t-end"/></svg><svg class="st tall"><use href="#warn"/></svg><svg class="i16"><use href="#face"/></svg><span class="nm">FACE_M...</span></div></td><td><svg class="bit"><use href="#mill"/></svg></td><td>T7D6J</td><td>7</td></tr>
            <tr><td><div class="node"><i class="tc"></i><button class="exp" aria-label="折叠 B6"><svg class="tc"><use href="#t-box"/></svg></button><svg class="st tall"><use href="#warn"/></svg><svg class="i16"><use href="#folder"/></svg><span class="nm">B6</span></div></td><td></td><td></td><td></td></tr>
            <tr class="op"><td><div class="node"><i class="tc"></i><svg class="tc"><use href="#t-line"/></svg><svg class="tc"><use href="#t-tee"/></svg><svg class="st tall"><use href="#warn"/></svg><svg class="i16"><use href="#planar"/></svg><span class="nm">PLANAR...</span></div></td><td><svg class="bit"><use href="#mill"/></svg></td><td>T2DJ-D6</td><td>2</td></tr>
            <tr><td><div class="node"><i class="tc"></i><svg class="tc"><use href="#t-line"/></svg><svg class="tc"><use href="#t-end"/></svg><svg class="st tall"><use href="#warn"/></svg><svg class="i16"><use href="#planar"/></svg><span class="nm">PLANAR...</span></div></td><td></td><td>T2DJ-D6</td><td>2</td></tr>
            <tr><td><div class="node"><i class="tc"></i><svg class="tc"><use href="#t-tee"/></svg><svg class="st"><use href="#ok"/></svg><svg class="i16"><use href="#folder"/></svg><span class="nm">B7</span></div></td><td></td><td></td><td></td></tr>
            <tr><td><div class="node"><i class="tc"></i><svg class="tc"><use href="#t-end"/></svg><svg class="st"><use href="#ok"/></svg><svg class="i16"><use href="#folder"/></svg><span class="nm">B8</span></div></td><td></td><td></td><td></td></tr>
          </tbody>
        </table>
        <div class="vscroll">
          <span class="vhead"></span>
          <button class="arrow" aria-label="向上滚动"><i class="up"></i></button>
          <span class="vspace"></span>
          <span class="vthumb"><i></i><i></i><i></i></span>
          <button class="arrow" aria-label="向下滚动"><i class="down"></i></button>
        </div>
      </div>
      <div class="hscroll">
        <button class="arrow" aria-label="向左滚动"><i class="left"></i></button>
        <span class="hthumb"><i></i><i></i><i></i></span>
        <span class="hspace"></span>
        <button class="arrow" aria-label="向右滚动"><i class="right"></i></button>
      </div>
    </div>
    <div class="split"><span class="rule"></span><span class="handle"></span><span class="rule"></span></div>
    <button class="fold"><span class="ftext">相依性</span><span class="fchev"><svg class="i14" viewBox="0 0 14 14"><path d="M1 2h4l2 5 2-5h4L8 12H6z" fill="#555"/></svg></span></button>
    <button class="fold"><span class="ftext">细节</span><span class="fchev"><svg class="i14" viewBox="0 0 14 14"><path d="M1 2h4l2 5 2-5h4L8 12H6z" fill="#555"/></svg></span></button>
  </section>

  <section class="view">
    <svg class="scene" viewBox="494 193 871 472" preserveAspectRatio="xMinYMin slice">
      <path d="M564.500 193v100M564.500 358v308M493 326.500h39M596 326.500h770" stroke="#000"/>
      <g transform="translate(720 260) scale(.33333)" stroke="#17272f" stroke-width="3" stroke-linejoin="round">
        <path d="M26 296l4 9 845 490v92L648 757l-2-12-178-102-208-122v7L30 400z" fill="#005fa3"/>
        <path d="M32 306v95" fill="none"/>
        <path d="M875 795h30v92l-10 3h-17l-3-3z" fill="#004f88"/>
        <path d="M905 795l410-242v98L905 889z" fill="#0071c0"/>
        <path d="M1309 557v96" fill="none"/>
        <path d="M26 296q2-6 8-9L436 55l6-3h22l6 3 845 490v8L912 793q-7 4-15 4h-12q-6 0-10-2L30 305z" fill="#00c8ff"/>
        <path d="M152 278q-12-14 8-30l208-120q30-14 60 0l117 68 27-14q22-12 48 0l470 270q18 12 6 28l-32 20 112 60q30 14 16 32l-22 18-195 112q-25 10-60 0l-115-69-25 14q-30 8-60 0L260 400q-26-15-12-30l30-18z" fill="#00c8ff"/>
        <g stroke="none">
          <path d="M158 260l210-122h58l119 67 29-17h44l470 270v28L618 190h-46l-27 14-119-67h-58z" fill="#35c7ec"/>
          <path d="M167 256l203-117v42L175 292l-8-6z" fill="#0071c0"/>
          <path d="M370 137q30-8 56 1v42q-28-10-56 1z" fill="url(#bore)"/>
          <path d="M426 139l119 67v44l-120-70z" fill="#005fa3"/>
          <path d="M545 206l27-14v46l-27 13z" fill="#0071c0"/>
          <path d="M572 192q24-10 46 0v43q-22-10-46 3z" fill="url(#bore)"/>
          <path d="M618 196l467 266v25l-15 8-452-260z" fill="#005fa3"/>
          <path d="M1058 501l119 69v34l-8 6-111-62z" fill="#005fa3"/>
          <path d="M1085 458l12 6-2 17-10 6zM1177 568l14 8-3 20-11 8z" fill="#0073be"/>
          <path d="M287 356v49l-26-7v-27z" fill="#0071c0"/>
          <path d="M247 373l14-5v30l-14-15zM152 263l13-7v29l-13-12z" fill="#1290d0"/>
          <path d="M252 365l28-12 7 4-26 13zM370 130q28-14 56 0v7q-28-8-56 2zM572 182q22-10 44 0v9q-22-7-44 1z" fill="#45dcff"/>
        </g>
        <path d="M167 252v36M370 138v44M425 138v44M545 196v54M572 188v50M617 190v45M1085 456v32M1058 502v46M1177 570v35M287 355v50M262 370v28M175 292l195-111q28-12 55 0l120 69 27-13q24-12 46 0l452 260M1058 548l111 62M168 250l200-115q30-12 58 0l119 70 27-17q22-9 48 2l465 267M1058 502l119 68M170 290l108 62 9 5" fill="none"/>
        <ellipse cx="453" cy="96" rx="23" ry="14" fill="url(#bore)"/><ellipse cx="103" cy="297" rx="24" ry="15" fill="url(#bore)"/><ellipse cx="1239" cy="549" rx="23" ry="14" fill="url(#bore)"/><ellipse cx="889" cy="751" rx="24" ry="15" fill="url(#bore)"/>
        <ellipse cx="484" cy="366" rx="54" ry="32" fill="#32c7ee"/><ellipse cx="484" cy="371" rx="47" ry="26" fill="url(#bore)"/><path d="M450 389q34-10 68 0-34 18-68 0z" fill="#dfe1e3" stroke="none"/><path d="M500 390l16-10v-8" stroke="#3355ee" fill="none"/>
        <ellipse cx="859" cy="582" rx="54" ry="32" fill="#32c7ee"/><ellipse cx="859" cy="587" rx="47" ry="26" fill="url(#bore)"/><path d="M818 600q40-26 82 0-40 24-82 0z" fill="#dfe1e3" stroke="none"/>
        <path d="M185 199.500h533" stroke="#e02818" stroke-width="3"/><path d="M240 199.500h24M450 199.500h30M530 199.500h24M620 199.500h30" stroke="#c9dfd0" stroke-width="3"/><path d="M268 199.500h70M480 199.500h50M580 199.500h40" stroke="#e0a020" stroke-width="3"/>
        <path d="M260 530l390 224" stroke="#2a4cff" stroke-dasharray="12 3" fill="none"/>
        <path d="M671 518L490 622" stroke="#a9dda0" stroke-width="4"/><path d="M452 646l28-32 20 4v16z" fill="#a7e59c" stroke="none"/>
        <path d="M671 518l180 104" stroke="#e69aa0" stroke-width="4"/><path d="M892 645l-50-13 1-18 20 2z" fill="#f19a9a" stroke="none"/>
        <path d="M671 518v210" stroke="#7078c8" stroke-width="5"/><path d="M660 722h22l-6 48h-9z" fill="#7ea0f0" stroke="none"/><ellipse cx="671" cy="722" rx="11" ry="6" fill="#b8d0ff" stroke="none"/>
      </g>
      <text class="ax" x="871" y="487" fill="#289028">YM</text><text class="ax" x="999" y="487" fill="#c04848">XM</text><text class="ax" x="947" y="528" fill="#2048e0">ZM</text>
      <path d="M548.500 598l12 7v14l-12 7-12-7v-14z" fill="#d2d3d4" stroke="#aaa"/><path d="M536.500 605l24 14M560.500 605l-24 14M548.500 598v28" stroke="#aaa"/>
      <path d="M537 618l20-11" stroke="#a0c0a0" stroke-width="2"/><path d="M536 620v-22" stroke="#1030a8" stroke-width="2"/><path d="M533 602l3-6 3 6z" fill="#1030a8"/><path d="M536 620l20 11" stroke="#c02020" stroke-width="3"/><circle cx="536" cy="620" r="4" fill="#c8c8c8" stroke="#888" stroke-width=".5"/>
      <text class="ax" x="531" y="596" fill="#2858e0">Z</text><text class="ax" x="556" y="609" fill="#48a048">Y</text><text class="ax" x="555" y="638" fill="#c83838">X</text>
    </svg>
  </section>
</main>

<footer class="bottom">
  <div class="bar">
    <span class="grip"></span>
    <button class="cmd off" disabled><svg class="i24"><use href="#a-disp"/></svg>处理显示装配</button>
    <button class="cmd"><svg class="i24"><use href="#a-add"/></svg>添加组件</button>
    <button class="cmd"><svg class="i24"><use href="#a-move"/></svg>移动组件</button>
    <button class="cmd"><svg class="i24"><use href="#mirror"/></svg>装配约束</button>
    <span class="sep"></span>
    <button class="cmd"><svg class="i24"><use href="#a-exp"/></svg>爆炸图</button>
    <button class="more" aria-label="工具条选项"><i class="tri"></i></button>
  </div>
</footer>

<button class="upload"><span class="uicon"><svg class="i22" viewBox="0 0 22 22"><circle cx="11" cy="8" r="3.500" /><circle cx="6" cy="14" r="3.500"/><circle cx="16" cy="14" r="3.500"/></svg></span><span class="utext">拖拽上传</span></button>

<div class="watermark">
  <svg class="hex" viewBox="0 0 72 82"><path d="M36 0l36 20v42L36 82 0 62V20z" fill="#6cc1ea"/><path d="M0 20L36 0l14 8q6 12 5 21Q34 10 0 20z" fill="#c4e4f3"/><path d="M0 20q30-10 55 9L36 18 16 29q-15 12-16 33z" fill="#a2d7f0"/><path d="M0 62q1-21 16-33v24q4 18 20 29z" fill="#84caec"/><path d="M50 8l22 12v22Q66 55 55 53V29q1-9-5-21z" fill="#78c9ee"/><path d="M16 29l20-11 19 11v24L36 64 16 53z" fill="#dcebf3"/><path d="M20 32l16-9 16 9v18l-16 9-16-9z" fill="#54aedd"/><path d="M20 32l16-9 16 9-16 9z" fill="#9fd3ee"/><path d="M36 41v18M20 32l16 9 16-9M0 20q32-10 55 9M50 8q6 12 5 21v24M72 42Q62 68 16 53M36 82Q20 71 16 53V29M0 62q1-21 16-33" fill="none" stroke="#e6f3fa"/></svg>
  <div class="wtext"><span class="wbig">3D世界网</span><span class="wurl">WWW.3DSJW.COM</span></div>
</div>

<div class="meter">
  <div class="ball">75%</div>
  <div class="rates"><span><i class="r">↑</i>0.08K/s</span><span><i class="g">↓</i>0.05K/s</span></div>
  <button class="plus" aria-label="加速"><svg class="i22" viewBox="0 0 22 22"><circle cx="10" cy="12" r="9" fill="#3b86dc" stroke="#c0c8d4"/><path d="M10 8v8M6 12h8" stroke="#fff" stroke-width="2"/><circle cx="17" cy="6" r="4" fill="#d83030" stroke="#a01010" stroke-width=".6"/></svg></button>
</div>
</body>
</html>
```

FILE: styles.css
```css
* { box-sizing: border-box; }
html, body { height: 100%; }
body {
  margin: 0;
  display: flex;
  flex-direction: column;
  position: relative;
  overflow: hidden;
  background: #d9d9d9;
  color: #000;
  font: 12px/12px "Noto Sans CJK SC", sans-serif;
}
button {
  margin: 0;
  padding: 0;
  border: 0;
  background: none;
  color: inherit;
  font: inherit;
}
svg { display: block; flex: none; }
.defs { position: absolute; width: 0; height: 0; }
.i12 { width: 12px; height: 12px; }
.i14 { width: 14px; height: 14px; }
.i16 { width: 16px; height: 16px; }
.i18 { width: 18px; height: 18px; }
.i22 { width: 22px; height: 22px; }
.i24 { width: 24px; height: 24px; }
.i28 { width: 24px; height: 28px; }
.mono { font-family: "Liberation Mono", monospace; font-size: 12px; white-space: pre; }

/* title bar */
.titlebar {
  flex: none;
  height: 22px;
  display: flex;
  align-items: center;
  padding: 0 2px 0 3px;
  gap: 3px;
  color: #fff;
  border-top: 1px solid #000;
  border-radius: 4px 4px 0 0;
  background: linear-gradient(#7b7880, #5b585e 30%, #1a1a1a 32%, #1a1a1a 94%, #000);
}
.title {
  margin: 0;
  flex: 1;
  font: 13px/18px "Open Sans", "Noto Sans CJK SC", sans-serif;
}
.brand { font: 800 14px/18px "Open Sans", sans-serif; margin-right: 24px; }
.wins { display: flex; gap: 3px; }
.win {
  width: 19px;
  height: 19px;
  border: 1px solid #777;
  border-radius: 3px;
  background: linear-gradient(#77747a, #333 50%, #1d1d1d);
  color: #fff;
}
.win.close { background: linear-gradient(#f09a80, #e03818 50%, #f06030); border-color: #f3b09c; }

/* menu bar */
.menubar {
  flex: none;
  height: 24px;
  display: flex;
  align-items: center;
  padding: 0 6px 1px 4px;
  background: linear-gradient(#ebebeb, #e0e0e0);
  border-bottom: 1px solid #bdbdbd;
}
.grip {
  flex: none;
  align-self: stretch;
  width: 3px;
  margin: 5px 0;
  background: repeating-linear-gradient(#a6a6a6 0 2px, #f4f4f4 2px 4px);
}
.menubar .grip { margin: 5px 1px 3px 0; }
.menus { flex: 1; display: flex; gap: 13px; margin-left: 5px; }
.menu { display: flex; align-items: center; line-height: 18px; white-space: nowrap; }
.menu span { font: 10px/18px "DejaVu Sans Mono", monospace; }
.docwins { display: flex; gap: 2px; }
.docwin {
  width: 17px;
  height: 17px;
  border: 1px solid #777;
  border-radius: 4px;
  background: linear-gradient(#fff, #dcdcdc);
  color: #555;
}

/* toolbars */
.tools {
  flex: none;
  background: linear-gradient(#e1e1e1, #cacaca);
  border-bottom: 1px solid #959595;
}
.toolrow { display: flex; height: 34px; }
.toolrow.big { height: 62px; }
.bar {
  display: flex;
  align-items: center;
  padding: 0 1px 0 4px;
  border-top: 1px solid #f4f4f4;
  border-right: 1px solid #bbb;
}
.bar + .bar { border-left: 1px solid #f4f4f4; }
.small { padding-bottom: 2px; }
.bar.second { margin-left: 16px; padding-left: 3px; }
.small .grip { margin-right: 4px; }
.second .grip { margin-right: 0; }
.start, .finder { display: flex; align-items: center; }
.start { width: 64px; gap: 3px; white-space: nowrap; }
.finder { width: 92px; padding-left: 3px; gap: 3px; white-space: nowrap; }
.tb { width: 31px; display: flex; justify-content: center; }
.drop { width: 14px; display: flex; justify-content: center; }
.tri {
  flex: none;
  border: 3px solid transparent;
  border-top-color: #000;
  border-bottom: 0;
}
.more { width: 12px; align-self: flex-end; display: flex; justify-content: center; padding-bottom: 7px; }
.sep {
  flex: none;
  align-self: stretch;
  width: 2px;
  margin: 2px;
  background: linear-gradient(90deg, #aaa 50%, #fafafa 50%);
}
.second .sep { margin: 2px 1px; }
.big .bar, .bottom .bar { align-items: stretch; }
.big .grip, .bottom .grip { margin: 5px 0 4px; }
.cmd {
  width: 60px;
  padding: 3px 5px 0;
  display: flex;
  flex-direction: column;
  align-items: center;
  justify-content: flex-start;
  gap: 3px;
  border: 1px solid transparent;
  margin-bottom: 1px;
  text-align: center;
  line-height: 12px;
}
.cmd.on { background: #fff; border-color: #666; border-radius: 3px; margin-top: 1px; }
.cmd.off { color: #999; }
.cmd.off svg { opacity: .6; }

/* selection bar */
.selbar {
  flex: none;
  height: 27px;
  display: flex;
  align-items: center;
  padding: 0 3px 0 6px;
  background: linear-gradient(#b0b0b0, #cdcdcd 30%, #d9d9d9);
  border-bottom: 1px solid #b5b5b5;
}
.combo { position: relative; width: 109px; margin-right: 8px; }
.combo.wide { width: 116px; margin-right: 5px; }
.pick {
  display: block;
  width: 100%;
  height: 17px;
  padding: 0 18px 0 0;
  appearance: none;
  border: 1px solid #555;
  border-radius: 3px;
  background: #fff;
  color: #000;
  font: 12px/15px "Noto Sans CJK SC", sans-serif;
}
.combo::before {
  content: "";
  position: absolute;
  inset: 1px 1px 1px auto;
  width: 17px;
  border-left: 1px solid #333;
  border-radius: 0 2px 2px 0;
  background: linear-gradient(#d9efff, #4a9ae0);
  pointer-events: none;
}
.combo::after {
  content: "";
  position: absolute;
  right: 4px;
  top: 6px;
  border: 6px solid transparent;
  border-top-color: #222;
  border-bottom: 0;
  pointer-events: none;
}
.sb { width: 23px; display: flex; justify-content: center; }
.selbar .more { margin-left: auto; padding-bottom: 5px; }

/* status line */
.status {
  flex: none;
  height: 22px;
  display: flex;
  align-items: center;
  border-top: 1px solid #f2f2f2;
  border-bottom: 1px solid #999;
  font-size: 13px;
  font-weight: 700;
  line-height: 18px;
}
.status > span { height: 20px; border-right: 1px solid #aaa; box-shadow: 1px 0 #f8f8f8; }
.st-cue { flex: 0 0 644px; }
.st-text { flex: 1; padding-left: 3px; }
.st-a { flex: 0 0 20px; }
.st-b { flex: 0 0 36px; }
.st-full { padding: 0 4px 0 3px; }

/* work area */
.work { flex: 1; min-height: 0; display: flex; }
.rail {
  flex: none;
  width: 33px;
  padding-top: 15px;
  display: flex;
  flex-direction: column;
  align-items: flex-end;
  gap: 2px;
  border-top: 2px solid #808080;
  border-right: 1px solid #777;
  background: linear-gradient(90deg, #aaa, #b8b8b8 60%, #8e8e8e);
}
.tab {
  flex: none;
  width: 27px;
  height: 40px;
  padding-left: 2px;
  display: flex;
  align-items: center;
  border: 1px solid #6c6c6c;
  border-right: 0;
  border-radius: 4px 0 0 4px;
  background: linear-gradient(90deg, #e8e8e8, #cdcdcd);
  overflow: hidden;
}
.tab.active { width: 29px; height: 44px; margin: -2px -1px -1px 0; padding-left: 4px; background: #ebebeb; }
.tab.apart { margin-top: 12px; }
.tab.clipped { height: 25px; align-items: flex-start; border-bottom-left-radius: 0; }
.steps { align-self: flex-start; margin: 2px 0 0 10px; display: flex; flex-direction: column; gap: 1px; }
.step {
  width: 16px;
  height: 15px;
  display: flex;
  flex-direction: column;
  align-items: center;
  justify-content: center;
  gap: 1px;
  border: 1px solid #fff;
  border-color: #f8f8f8 #777 #777 #f8f8f8;
  background: #d8d8d8;
}
.up, .down, .left, .right { border: 4px solid transparent; }
.up { border-top: 0; border-bottom-color: #333; }
.down { border-bottom: 0; border-top-color: #333; }
.left { border-left: 0; border-right-color: #333; }
.right { border-right: 0; border-left-color: #333; }
.up.dim { border-bottom-color: #999; }
.line { width: 8px; height: 1px; background: #999; }
.line.dark { background: #333; }

.panel {
  flex: 0 0 460px;
  min-width: 0;
  padding: 0 9px;
  display: flex;
  flex-direction: column;
  border-top: 2px solid #808080;
  border-right: 2px solid #6c6c6c;
  border-bottom: 1px solid #808080;
  background: #ebebeb;
}
.ptitle {
  margin: 0;
  flex: none;
  height: 29px;
  padding: 0 0 2px 5px;
  display: flex;
  align-items: center;
  font-size: 13px;
  font-weight: 700;
  white-space: pre;
}
.ptitle .i12 { margin-right: 13px; }
.treebox { border: 1px solid #5f5f5f; padding: 0 1px 2px; background: #efefef; }
.treemain { display: flex; }
.tree { flex: 1; table-layout: fixed; width: 0; border-collapse: separate; border-spacing: 0; }
.c1 { width: 155px; }
.c2 { width: 100px; }
.tree th {
  height: 17px;
  padding: 0 0 0 6px;
  text-align: left;
  font-weight: 400;
  line-height: 15px;
  border-bottom: 1px solid #888;
  border-right: 1px solid #aaa;
  background: linear-gradient(#f7f9f9 50%, #dcdfe0 60%);
}
.tree th:last-child { border-right: 0; }
.tree td {
  height: 20px;
  padding: 0 0 0 4px;
  color: #222;
  font: 10px/19px "DejaVu Sans Mono", monospace;
  border-bottom: 1px solid #e2e2e2;
  border-right: 1px solid #e2e2e2;
}
.tree td:first-child { padding: 0; border-right-color: #000; }
.tree td:last-child { border-right: 0; }
.tree tr:nth-child(odd) td { background: #f7f7f7; }
.tree tr:nth-child(even) td { background: #fff; }
.tree .op td { color: #2a6cb8; }
.tree .op td:first-child { white-space: nowrap; }
.node { display: flex; align-items: center; height: 19px; overflow: hidden; }
.tc { display: block; flex: none; width: 19px; height: 20px; }
.exp { flex: none; display: block; }
.st { width: 16px; height: 14px; }
.st.tall { height: 18px; }
.nm { flex: 1; margin-left: 1px; padding-left: 1px; }
.tree tbody .sel td + td { background: #39f; border-bottom: 1px dotted #f09020; border-top: 1px dotted #f09020; }
.sel .nm { background: #39f; color: #fff; border: 1px dotted #f09020; border-width: 1px 0; line-height: 17px; }
.bit { width: 8px; height: 15px; margin-left: 4px; }
.arrow { flex: none; display: flex; align-items: center; justify-content: center; width: 16px; height: 17px; }
.vscroll { flex: none; width: 17px; display: flex; flex-direction: column; background: #f0f0f0; }
.vhead { flex: none; height: 17px; border-bottom: 1px solid #888; background: linear-gradient(#f7f9f9 50%, #dcdfe0 60%); }
.vspace { flex: 184; }
.vthumb, .hthumb {
  display: flex;
  align-items: center;
  justify-content: center;
  gap: 1px;
  border: 1px solid #888;
  border-radius: 1px;
}
.vthumb { flex: 123; flex-direction: column; width: 15px; background: linear-gradient(90deg, #f4f4f4, #d2d2d6 60%, #bbbbc2); }
.vthumb i { width: 7px; height: 2px; background: linear-gradient(#666 50%, #fff 50%); }
.hscroll { display: flex; align-items: center; height: 18px; padding: 2px 18px 1px 2px; }
.hthumb { flex: 244; height: 15px; background: linear-gradient(#f4f4f4, #d2d2d6 60%, #bbbbc2); }
.hthumb i { width: 2px; height: 7px; background: linear-gradient(90deg, #666 50%, #fff 50%); }
.hspace { flex: 141; }
.split { flex: none; height: 12px; display: flex; align-items: center; gap: 5px; }
.rule { flex: 1; height: 2px; background: linear-gradient(#aaa 50%, #fff 50%); }
.handle { width: 80px; height: 6px; border: 1px solid #fff; border-color: #fff #999 #999 #fff; background: #d2d2d2; }
.fold {
  flex: none;
  height: 23px;
  display: flex;
  align-items: center;
  border: 1px solid #fff;
  border-color: #fff #999 #999 #fff;
  background: linear-gradient(#f8fafa 50%, #dadcdd 55%, #d2d4d5);
  font-size: 13px;
  font-weight: 700;
  text-align: left;
}
.ftext { flex: 1; padding: 0 0 2px 5px; }
.fchev { width: 22px; align-self: stretch; display: flex; align-items: center; justify-content: center; border-left: 1px solid #aaa; }

.view {
  flex: 1;
  min-width: 0;
  border: 1px solid #f2a04a;
  background: linear-gradient(#b4b5b6, #d0d1d3 45%, #e6e8e9 80%);
}
.scene { width: 100%; height: 100%; }
.ax { font: 12px "Liberation Sans", sans-serif; }

/* bottom toolbar */
.bottom { flex: none; height: 62px; display: flex; background: linear-gradient(#e4e4e4, #cacaca); }

/* floating widgets */
.upload {
  position: absolute;
  top: 27px;
  right: 107px;
  width: 104px;
  height: 25px;
  display: flex;
  border: 1px solid #2384c8;
  border-radius: 3px;
  background: linear-gradient(#eaf6ff, #9fd5f7);
  box-shadow: 0 1px 2px #888;
  color: #33658c;
}
.uicon { width: 29px; height: 23px; padding-left: 4px; background: linear-gradient(#3fa9f0, #1c8ee0); }
.uicon circle { fill: none; stroke: #fff; stroke-width: 3px; }
.utext { flex: 1; line-height: 25px; }
.watermark {
  position: absolute;
  right: 25px;
  bottom: 12px;
  display: flex;
  align-items: center;
  gap: 9px;
  pointer-events: none;
}
.hex { width: 72px; height: 82px; opacity: .85; }
.wtext { display: flex; flex-direction: column; gap: 3px; width: 177px; color: rgba(255, 255, 255, .6); white-space: nowrap; }
.wbig { font: 700 42px/42px "Liberation Sans", "Noto Sans CJK SC", sans-serif; }
.wurl { font: 16px/18px "DejaVu Sans", sans-serif; }
.meter {
  position: absolute;
  left: 914px;
  bottom: 3px;
  display: flex;
  align-items: center;
  height: 40px;
  width: 124px;
  border: 1px solid #999;
  border-radius: 20px;
  background: linear-gradient(#f8f8f8, #d0d0d0);
  box-shadow: 0 1px 4px #888;
}
.ball {
  flex: none;
  width: 48px;
  height: 48px;
  margin-left: -3px;
  border-radius: 50%;
  border: 2px solid #eee;
  outline: 1px solid #999;
  background: linear-gradient(#0d6b48, #5a9c80 25%, #58d868 27%, #40c858);
  box-shadow: inset 0 0 0 2px #169050;
  color: #fff;
  text-align: center;
  font: 15px/42px "Liberation Sans", sans-serif;
}
.rates { flex: 1; padding-left: 5px; display: flex; flex-direction: column; font: 10px/15px "Open Sans", sans-serif; }
.rates span { display: flex; white-space: nowrap; }
.rates i { width: 14px; font: 700 12px/15px "DejaVu Sans", sans-serif; }
.r { color: #e05030; }
.g { color: #189048; }
.plus { margin-right: 4px; }
```
